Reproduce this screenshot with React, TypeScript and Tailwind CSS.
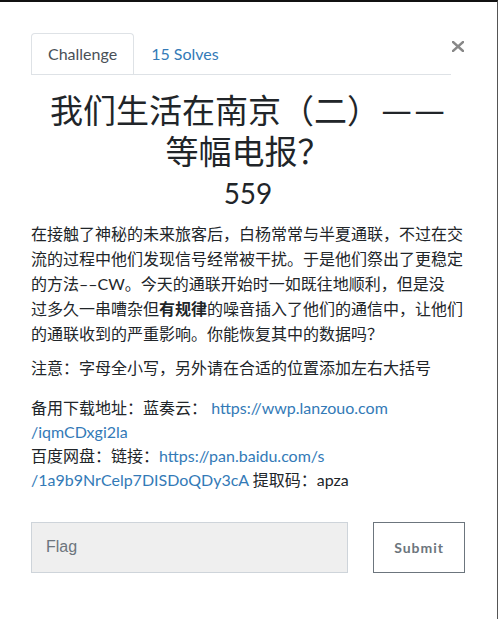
import React from "react"

export default function App() {
  return (
    <div className="w-[498px] h-[619px] bg-white border-t-2 border-t-[#111] border-r border-r-[#555] font-['Lato','Noto_Sans_CJK_SC',sans-serif] text-[#212529]">
      <div className="w-[465px] pl-[31px] pt-[31px]">
        {/* вкладки */}
        <div className="flex items-start">
          <div className="w-[420px] flex items-end border-b border-[#dee2e6]">
            <div className="px-4 py-2 border border-b-0 border-[#dee2e6] rounded-t-[4px] text-[16px] leading-6 text-[#495057]">
              Challenge
            </div>
            <div className="px-4 py-2 border border-transparent border-b-0 text-[16px] leading-6 text-[#337ab7]">
              15 Solves
            </div>
          </div>
          <svg width="12" height="11" viewBox="0 0 12 11" className="ml-px mt-[8px]">
            <path d="M1 1 L11 10 M11 1 L1 10" stroke="#888" strokeWidth="2.4" strokeLinecap="square" />
          </svg>
        </div>

        {/* заголовок */}
        <h2 className="mt-[15px] px-[7px] text-center text-[33px] leading-[1.2] font-normal font-['Noto_Sans_CJK_SC',sans-serif]">
          我们生活在南京（二）
          <span className="inline-block w-[1em] text-center font-['Lato',sans-serif] scale-x-125">—</span>
          <span className="inline-block w-[1em] text-center font-['Lato',sans-serif] scale-x-125">—</span>
          等幅电报？
        </h2>
        <h3 className="mt-[7px] text-center text-[28px] leading-[1.2] font-normal">559</h3>

        {/* описание */}
        <p className="mt-[10px] text-[16px] leading-[25px]">
          在接触了神秘的未来旅客后，白杨常常与半夏通联，不过在交流的过程中他们发现信号经常被干扰。于是他们祭出了更稳定的方法––CW。今天的通联开始时一如既往地顺利，但是没
          <br />
          过多久一串嘈杂但<b className="font-bold">有规律</b>的噪音插入了他们的通信中，让他们的通联收到的严重影响。你能恢复其中的数据吗？
        </p>
        <p className="mt-[10px] text-[16px] leading-6">注意：字母全小写，另外请在合适的位置添加左右大括号</p>
        <p className="mt-[16px] text-[16px] leading-6">
          备用下载地址：蓝奏云：{" "}
          <a className="text-[#337ab7]">
            https://wwp.lanzouo.com
            <br />
            /iqmCDxgi2la
          </a>
          <br />
          百度网盘：链接：
          <a className="text-[#337ab7]">
            https://pan.baidu.com/s
            <br />
            /1a9b9NrCelp7DISDoQDy3cA
          </a>{" "}
          提取码：apza
        </p>

        {/* форма */}
        <div className="mt-[30px] flex gap-[25px]">
          <input
            placeholder="Flag"
            className="w-[318px] h-[51px] px-[14px] bg-[#efefef] border border-[#ced4da] font-['Liberation_Sans',sans-serif] text-[16px] placeholder:text-[#6c757d] outline-none"
          />
          <button className="w-[92px] h-[51px] border border-[#6c757d] text-[#6c757d] text-[14px] font-bold tracking-[1px]">
            Submit
          </button>
        </div>
      </div>
    </div>
  )
}
